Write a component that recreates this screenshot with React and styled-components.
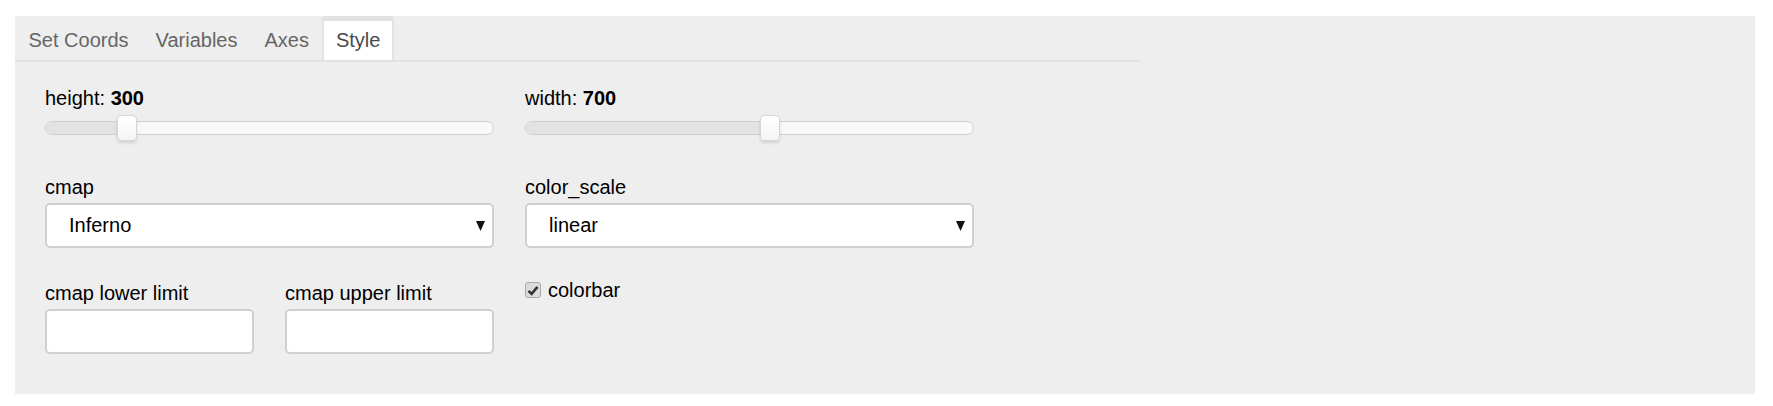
import { useState } from 'react';
import styled, { createGlobalStyle } from 'styled-components';

// Style tab of a plotting widget panel
const GlobalStyle = createGlobalStyle`
  body {
    margin: 0;
    background: #ffffff;
    font-family: "Liberation Sans", Arial, sans-serif;
  }
`;

const tabs = ['Set Coords', 'Variables', 'Axes', 'Style'];

const Slider = ({ label, value, pct }) => (
  <Field>
    <Label>
      {label}: <b>{value}</b>
    </Label>
    <SliderBox>
      <Track>
        <Fill style={{ width: `calc(${pct} * (100% - 20px) + 10px)` }} />
      </Track>
      <Thumb style={{ left: `calc(${pct} * (100% - 20px))` }} />
    </SliderBox>
  </Field>
);

const Dropdown = ({ label, value }) => (
  <Field>
    <Label>{label}</Label>
    <SelectBox>
      <span>{value}</span>
      <svg width="9" height="11" viewBox="0 0 9 11">
        <polygon points="0,1 9,1 4.5,11" fill="#111" />
      </svg>
    </SelectBox>
  </Field>
);

const App = () => {
  const [active, setActive] = useState('Style');
  const [colorbar, setColorbar] = useState(true);

  return (
    <>
      <GlobalStyle />
      <Page>
        <Panel>
          <TabBar>
            {tabs.map((t) => (
              <Tab key={t} $active={t === active} onClick={() => setActive(t)}>
                {t}
              </Tab>
            ))}
          </TabBar>
          <Content>
            <Slider label="height" value="300" pct={0.1685} />
            <Slider label="width" value="700" pct={0.548} />
            <Dropdown label="cmap" value="Inferno" />
            <Dropdown label="color_scale" value="linear" />
            <LimitRow>
              <Field>
                <Label>cmap lower limit</Label>
                <TextBox type="text" />
              </Field>
              <Field>
                <Label>cmap upper limit</Label>
                <TextBox type="text" />
              </Field>
            </LimitRow>
            <CheckRow onClick={() => setColorbar(!colorbar)}>
              <CheckBox>
                {colorbar && (
                  <svg width="12" height="11" viewBox="0 0 12 11">
                    <path d="M1.5 5.8 L4.6 8.9 L10.5 1.8" stroke="#333" strokeWidth="2.6" fill="none" />
                  </svg>
                )}
              </CheckBox>
              colorbar
            </CheckRow>
          </Content>
        </Panel>
      </Page>
    </>
  );
};

// Styled components
const Page = styled.div`
  padding: 16px 18px 12px 15px;
`;

const Panel = styled.div`
  background: #eeeeee;
  height: 378px;
  box-sizing: border-box;
`;

const TabBar = styled.div`
  display: flex;
  width: 1125px;
  border-bottom: 2px solid #e3e3e3;
`;

const Tab = styled.div`
  box-sizing: border-box;
  height: 44px;
  padding: 0 11.5px;
  border: 2px solid ${({ $active }) => ($active ? '#e2e2e2' : 'transparent')};
  border-top-width: 5px;
  border-bottom: 0;
  border-radius: 4px 4px 0 0;
  background: ${({ $active }) => ($active ? '#ffffff' : 'transparent')};
  color: ${({ $active }) => ($active ? '#4a4a4a' : '#666666')};
  font-size: 20px;
  line-height: 39px;
  cursor: pointer;
`;

const Content = styled.div`
  display: grid;
  grid-template-columns: 449px 449px;
  column-gap: 31px;
  row-gap: 33px;
  padding: 24px 30px 40px;
  align-items: start;
`;

const Field = styled.div`
  display: flex;
  flex-direction: column;
`;

const Label = styled.div`
  font-size: 20px;
  line-height: 24px;
  color: #000;
  margin-bottom: 4px;

  b {
    font-weight: 700;
  }
`;

const SliderBox = styled.div`
  position: relative;
  height: 28px;
  display: flex;
  align-items: center;
`;

const Track = styled.div`
  position: relative;
  width: 100%;
  height: 14px;
  box-sizing: border-box;
  border: 1px solid #cfcfcf;
  border-radius: 7px;
  background: #f8f8f8;
  overflow: hidden;
`;

const Fill = styled.div`
  height: 100%;
  background: #e2e2e2;
`;

const Thumb = styled.div`
  position: absolute;
  top: 1px;
  width: 20px;
  height: 26px;
  box-sizing: border-box;
  border: 1px solid #d6d6d6;
  border-radius: 4px;
  background: linear-gradient(#ffffff, #f5f5f5);
  box-shadow: 0 2px 3px rgba(0, 0, 0, 0.12);
`;

const SelectBox = styled.div`
  display: flex;
  align-items: center;
  justify-content: space-between;
  height: 45px;
  box-sizing: border-box;
  padding: 0 7px 0 22px;
  border: 2px solid #cfcfcf;
  border-radius: 5px;
  background: #ffffff;
  font-size: 20px;
  color: #000;
`;

const LimitRow = styled.div`
  display: grid;
  grid-template-columns: 209px 209px;
  column-gap: 31px;
`;

const TextBox = styled.input`
  height: 45px;
  box-sizing: border-box;
  border: 2px solid #cfcfcf;
  border-radius: 5px;
  background: #ffffff;
  padding: 0 10px;
  font-size: 20px;
  font-family: inherit;
  outline: none;
`;

const CheckRow = styled.label`
  display: flex;
  align-items: center;
  gap: 7px;
  height: 18px;
  font-size: 20px;
  color: #000;
  cursor: pointer;
`;

const CheckBox = styled.span`
  display: flex;
  align-items: center;
  justify-content: center;
  width: 16px;
  height: 16px;
  box-sizing: border-box;
  border: 1px solid #a8a8a8;
  border-radius: 3px;
  background: #dcdcdc;
`;

export default App;
